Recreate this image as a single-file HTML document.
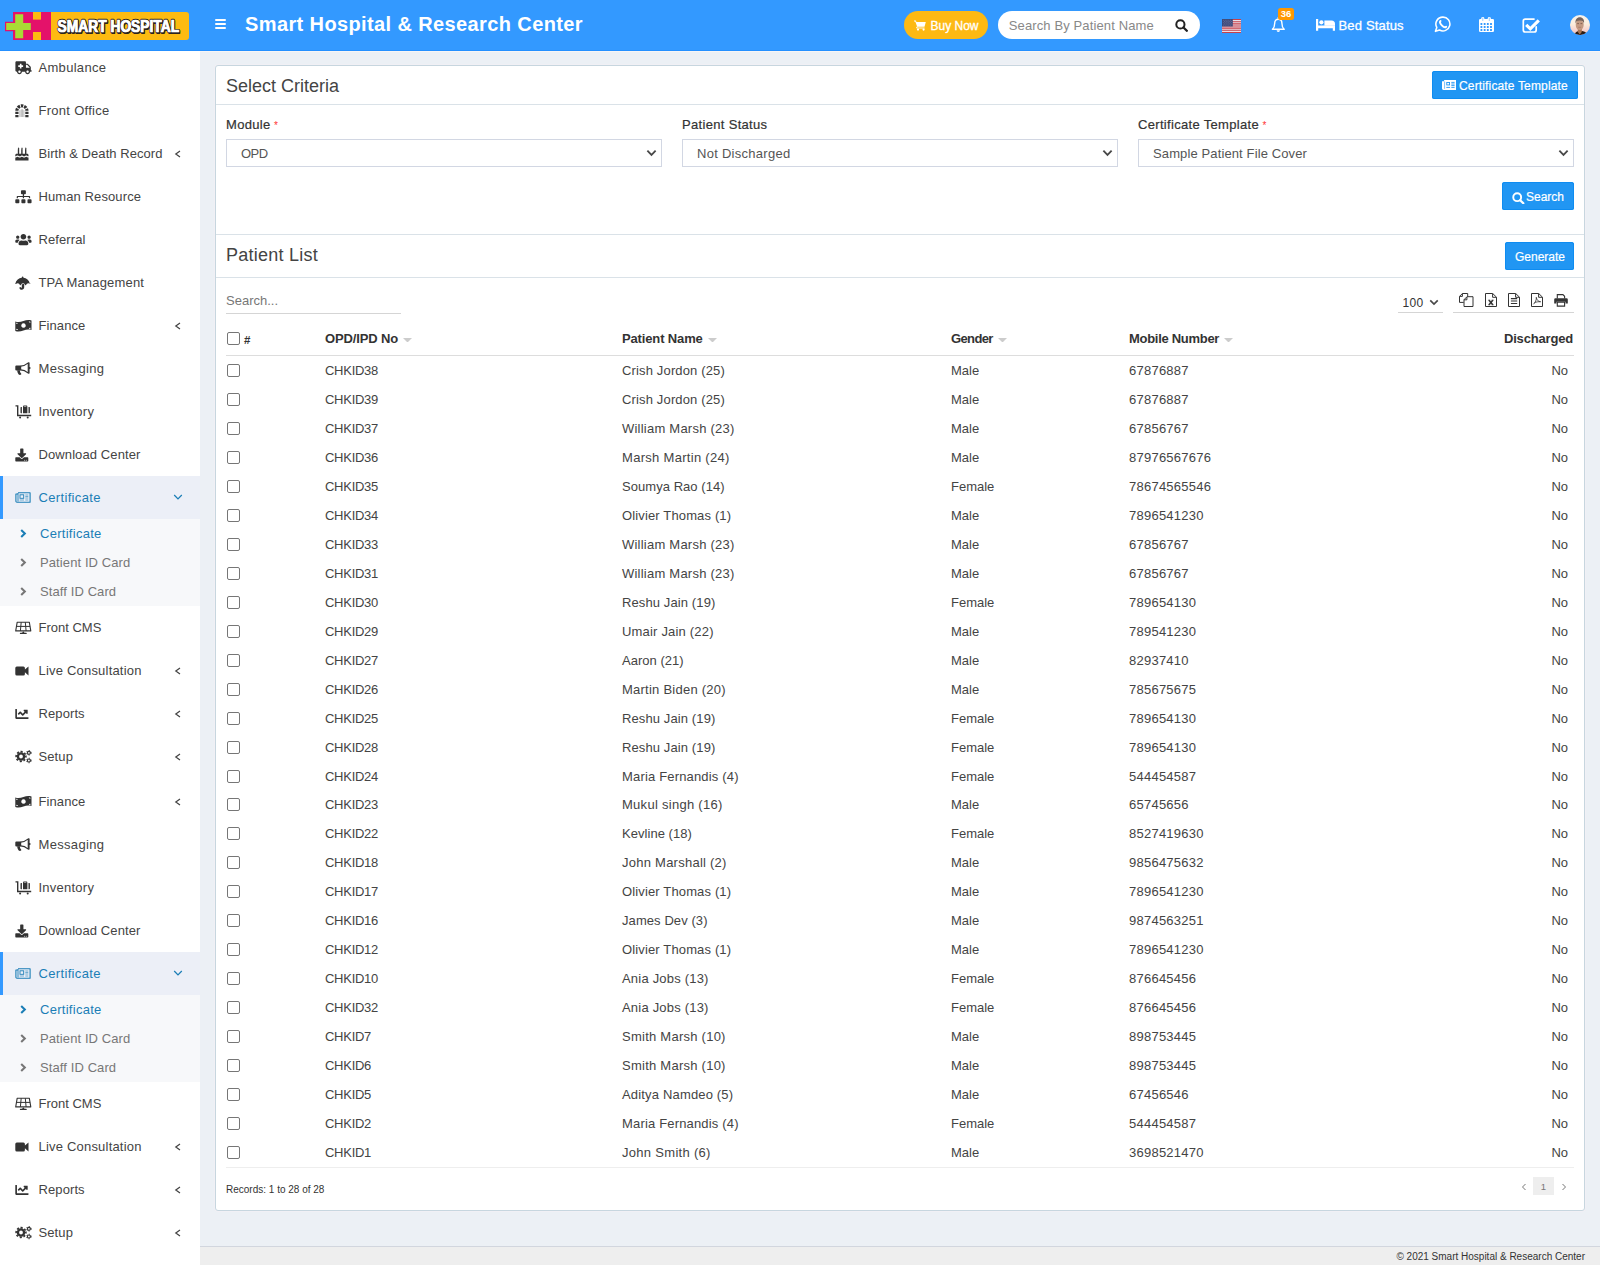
<!DOCTYPE html>
<html lang="en"><head><meta charset="utf-8"><title>Smart Hospital &amp; Research Center</title>
<style>
*{box-sizing:border-box}
html,body{margin:0;padding:0}
html{width:1600px;height:1265px;overflow:hidden}
body{width:1600px;height:1265px;overflow:hidden;background:#ecf0f5;font-family:"Liberation Sans",sans-serif;font-size:13px;color:#444;position:relative}
svg{display:block}
#hdr{position:absolute;left:0;top:0;width:1600px;height:51px;background:#3399ff;border-bottom:1px solid #2590ff;color:#fff}
#hl{position:absolute;left:200px;top:51px;width:1400px;height:1px;background:#f8f5f5}
#hdr>div{position:absolute}
#logo{left:5px;top:12px;width:185px;height:28px}
#burger{left:215px;top:19px;width:11px;height:10px}
#burger i{display:block;height:2px;background:#fff;margin-bottom:2px;border-radius:1px}
#title{left:245px;top:11px;font-size:20px;font-weight:bold;line-height:26px;letter-spacing:.385px;white-space:nowrap}
#buy{left:904px;top:11px;width:84px;height:28px;border-radius:14px;background:#fdb913;font-size:12px;-webkit-text-stroke:.3px #fff;line-height:28px;white-space:nowrap}
#buy svg{position:absolute;left:10.300px;top:9.300px;width:12px;height:11px}
#buy span{position:absolute;left:26.500px;top:1px}
#srch{left:998px;top:11px;width:202px;height:28px;border-radius:14px;background:#fff;color:#888;font-size:13px;letter-spacing:.12px;line-height:28px;white-space:nowrap}
#srch span{position:absolute;left:10.800px;top:1px}
#srch svg{position:absolute;left:177.300px;top:7.800px;width:13px;height:13px}
#flag{left:1222px;top:19px;width:19px;height:14px}
#bell{left:1270px;top:8px;width:26px;height:30px}
#bell svg{position:absolute;left:1.400px;top:9.400px;width:15px;height:16px}
#bell b{position:absolute;left:8px;top:0;width:16px;height:12px;border-radius:2.500px;background:#ff9800;font-size:9.500px;line-height:12.500px;text-align:center;font-weight:bold}
#bed{left:1315px;top:11px;height:28px;font-size:13px;letter-spacing:.16px;-webkit-text-stroke:.3px #fff;line-height:28px;white-space:nowrap}
#bed svg{position:absolute;left:1px;top:7.500px;width:19px;height:12px}
#bed span{position:absolute;left:23.500px;top:1px}
#wa{left:1433.500px;top:16px;width:17.500px;height:17.500px}
#cal{left:1479.200px;top:17px;width:15px;height:15px}
#chk{left:1522.400px;top:17.500px;width:18px;height:15px}
#ava{left:1570px;top:15px;width:20px;height:20px}
#side{position:absolute;left:0;top:51px;width:200px;height:1214px;background:#fff;overflow:hidden}
.mi{position:absolute;left:0;width:200px;height:43px;margin-top:-51px;color:#444;font-size:13px;letter-spacing:.1px;line-height:43px;white-space:nowrap}
.mi .ico{position:absolute;left:14.5px;top:15px;width:17px;height:14px;color:#333}
.mi .ico svg{width:17px;height:14px}
.mi .lb{position:absolute;left:38.500px;top:0}
.mi .ar{position:absolute;left:174px;top:18.500px;width:8px;height:8px;color:#444}
.mi .ar.ad{left:170px;top:17.800px;width:10px;height:8px}
.mi.act{background:#eceff7;border-left:3px solid #3399ff;color:#1b7eb6}
.mi.act .ico{left:11.5px;color:#1b7eb6}
.mi.act .lb{left:35.500px}
.mi.act .ar{left:170px;color:#1b7eb6}
.sub{position:absolute;left:0;width:200px;height:87px;margin-top:-51px;background:#f7f8fa}
.si{position:absolute;left:0;width:200px;height:29px;line-height:29px;color:#777;font-size:13px;letter-spacing:.1px;white-space:nowrap}
.si span{position:absolute;left:40px;top:0}
.si .ch{position:absolute;left:19px;top:10px;width:8px;height:9px}
.si.sa{color:#1b7eb6}
#card{position:absolute;left:215px;top:65px;width:1370px;height:1146px;background:#fff;border:1px solid #c7d6df;border-radius:3px;box-shadow:0 0 0 1px rgba(246,240,246,.5)}
#card>div,#card>table{position:absolute}
.h1{left:10px;height:38px;line-height:40px;font-size:18px;color:#444;white-space:nowrap}
.hr{left:0;width:1368px;height:1px;background:#dae2e8}
.btn{background:#2196f3;box-shadow:inset 0 0 0 1px #0e8cf1;color:#fff;border-radius:2.500px;font-size:12px;letter-spacing:.15px;-webkit-text-stroke:.2px #fff;white-space:nowrap}
.btn span{position:absolute;top:1px}
#btpl{left:1216px;top:5px;width:146px;height:28px;line-height:28px}
#btpl svg{position:absolute;left:9.800px;top:9.200px;width:14px;height:10px}
#btpl span{left:27px}
#bsearch{left:1286px;top:116px;width:72px;height:28px;line-height:28px}
#bsearch svg{position:absolute;left:10px;top:9.500px;width:12.500px;height:12.500px}
#bsearch span{left:24px}
#bgen{left:1289px;top:176px;width:69px;height:28px;line-height:28px}
#bgen span{left:10px}
.lab{top:48.500px;font-size:13px;line-height:20px;font-weight:normal;-webkit-text-stroke:.2px #333;letter-spacing:.32px;color:#333;white-space:nowrap}
.lab em{color:#f33;-webkit-text-stroke:0;font-style:normal;font-weight:normal;font-size:10px;margin-left:3.500px;position:relative;top:0}
.sel{top:73px;width:436px;height:28px;border:1px solid #d2d7e3;border-radius:0;line-height:26px;color:#555;font-size:13px;white-space:nowrap}
.sel span{position:absolute;left:14px;top:1px}
.sel .sar{position:absolute;right:4px;top:9.400px;width:11px;height:8px}
#tsearch{left:10px;top:225px;width:175px;height:23px;border-bottom:1px solid #d5d5d5;color:#777;font-size:13px;line-height:20px}
#plen{left:1182px;top:225px;width:45px;height:22px;border-bottom:1px solid #d5d5d5;line-height:23px;font-size:12px;letter-spacing:.3px;color:#333}
#plen span{position:absolute;left:4.500px;top:.5px}
#plen .sar{position:absolute;left:31px;top:8px;width:10px;height:7px}
#tools{left:1237px;top:225px;width:121px;height:22px;border-bottom:1px solid #d5d5d5}
#tools svg{position:absolute;top:2px;width:13px;height:14px}
#tools svg:first-child{width:15px}
#tools svg:last-child{width:14px;height:13px}
#tb{left:10px;top:256px;width:1348px;border-collapse:separate;border-spacing:0;table-layout:fixed;font-size:13px}
#tb th{height:34px;text-align:left;font-weight:bold;color:#333;border-bottom:1px solid #ddd;padding:0;white-space:nowrap;vertical-align:middle}
#tb td{height:29px;padding:0;color:#444;white-space:nowrap;vertical-align:middle}
#tb tbody tr:last-child td{border-bottom:1px solid #eee;height:30px}
#tb .c0{width:99px}
#tb .c1{width:297px}
#tb .c2{width:329px}
#tb .c3{width:178px}
#tb .c4{width:300px}
#tb .c5{text-align:right}
#tb td.c5{padding-right:6px}
.cb{display:inline-block;width:13px;height:13px;border:1px solid #767676;border-radius:2px;background:#fff;vertical-align:middle;margin-left:1px}
.hash{font-weight:bold;font-size:11.500px;margin-left:4px;vertical-align:middle;position:relative;top:.5px}
.so{display:inline-block;width:9px;height:4.500px;color:#ccc;margin-left:5px;vertical-align:middle;position:relative;top:.5px}
#rec{left:10px;top:1114px;font-size:10px;line-height:20px;color:#333;white-space:nowrap}
#pag{left:1299px;top:1111px;width:58px;height:18px}
#pag span{position:absolute;left:18px;top:0;width:21px;height:18px;background:#eee;color:#777;font-size:9.500px;line-height:20px;text-align:center}
#pag svg{position:absolute;top:5.700px;width:6px;height:8px}
#pag svg:first-child{left:5.500px}
#pag svg:last-child{left:46px}
#foot{position:absolute;left:200px;top:1246px;width:1400px;height:19px;background:#eee;border-top:1px solid #d2d6de;font-size:10px;padding-top:1px;line-height:17px;text-align:right;padding-right:15px;color:#333;white-space:nowrap}

#tb th{letter-spacing:-.14px}
#tb td.c1{letter-spacing:-.27px}
#tb td.c2{letter-spacing:.15px}
#tb td.c4{letter-spacing:.24px}
#tb td.c0{padding-bottom:2px}
#tb th .cb{position:relative;top:-1px}
.h1.pl{letter-spacing:.25px}
#bgen span{letter-spacing:0}
#bsearch span{letter-spacing:0}
#tb th.c3{letter-spacing:-.62px}
#tb th.c3 .so{margin-left:5.500px}
#tb th.c4{letter-spacing:-.29px}
#tb th.c5{letter-spacing:-.18px;padding-right:1px}
#tb tbody tr:nth-child(16) td{height:28.200px}
#tb tbody tr:nth-child(16) td{padding-bottom:1.200px}
#tb tbody tr:nth-child(16) td.c0{padding-bottom:3.200px}

</style></head><body>
<div id="hdr">
 <div id="logo"><svg viewBox="0 0 185 28" width="185" height="28"><path d="M46 0H181a3 3 0 0 1 3 3V25a3 3 0 0 1 -3 3H46Z" fill="#fdbb11"/><rect x="8" y="0" width="38" height="28" fill="#e4126a"/><rect x="28" y="0" width="8" height="7.600" fill="#fdbb11"/><rect x="28" y="20" width="8" height="8" fill="#fdbb11"/><path d="M9 1H19.400V9.800H27V19.200H19.400V27.400H9V19.200H0V9.800H9Z" fill="#e4126a"/><path d="M10.200 2.200H18.200V11H25.800V18H18.200V26.200H10.200V18H1.200V11H10.200Z" fill="#a9dc35"/><text x="53.300" y="21" font-family="Liberation Sans, sans-serif" font-weight="bold" font-size="16.500" textLength="121.500" lengthAdjust="spacingAndGlyphs" fill="#2b2320" stroke="#2b2320" stroke-width="2.200" stroke-linejoin="round">SMART HOSPITAL</text><text x="52.600" y="20.300" font-family="Liberation Sans, sans-serif" font-weight="bold" font-size="16.500" textLength="121.500" lengthAdjust="spacingAndGlyphs" fill="#fff" stroke="#2b2320" stroke-width="2.400" stroke-linejoin="round" paint-order="stroke">SMART HOSPITAL</text><text x="52.600" y="20.300" font-family="Liberation Sans, sans-serif" font-weight="bold" font-size="16.500" textLength="121.500" lengthAdjust="spacingAndGlyphs" fill="#fff" stroke="#fff" stroke-width=".7">SMART HOSPITAL</text></svg></div>
 <div id="burger"><i></i><i></i><i></i></div>
 <div id="title">Smart Hospital &amp; Research Center</div>
 <div id="buy"><svg viewBox="0 0 12 11"><path d="M0 .6h1.900l.5 1.500h9.400l-1.300 4.600h-7.300l-1.900-5.200h-1.300z" fill="#fff"/><path d="M3.200 6.500l-.6 1.500h8" stroke="#fff" stroke-width=".9" fill="none"/><circle cx="4" cy="9.600" r="1.100" fill="#fff"/><circle cx="9.600" cy="9.600" r="1.100" fill="#fff"/></svg><span>Buy Now</span></div>
 <div id="srch"><span>Search By Patient Name</span><svg viewBox="0 0 13 13"><circle cx="5.400" cy="5.400" r="4.100" fill="none" stroke="#222" stroke-width="2"/><path d="M8.500 8.500l3.300 3.300" stroke="#222" stroke-width="2.300" stroke-linecap="round"/></svg></div>
 <div id="flag"><svg viewBox="0 0 19 14"><rect width="19" height="14" fill="#e9dfe6"/><path d="M0 .55h19M0 2.700h19M0 4.850h19M0 7h19M0 9.150h19M0 11.300h19M0 13.450h19" stroke="#c8414b" stroke-width="1.100"/><rect width="10.800" height="7.500" fill="#3f4a7a"/><path d="M1 1.300h9M1 3.700h9M1 6.100h9" stroke="#6b75a0" stroke-width=".8" stroke-dasharray=".8 1"/><path d="M2 2.500h8M2 4.900h8" stroke="#6b75a0" stroke-width=".8" stroke-dasharray=".8 1"/></svg></div>
 <div id="bell"><svg viewBox="0 0 15 16"><path d="M7.300 .6v1.400M1.400 12.200c1.700-1.400 2.300-3.200 2.300-6 0-2.400 1.500-3.900 3.600-3.900s3.600 1.500 3.600 3.900c0 2.800.6 4.600 2.300 6z" fill="none" stroke="#fff" stroke-width="1.400" stroke-linejoin="round" stroke-linecap="round"/><path d="M5.600 13.200a1.700 1.700 0 0 0 3.400 0z" fill="#fff"/></svg><b>36</b></div>
 <div id="bed"><svg viewBox="0 0 19 12"><path d="M0 0h2.200v6.500h14.600v0h2.200v5.300h-2.200v-2.600h-14.600v2.600h-2.200z" fill="#fff"/><circle cx="5.400" cy="3.300" r="2.100" fill="#fff"/><path d="M8.400 1.500h7.100a3.500 3.500 0 0 1 3.500 3.500v1.800h-10.600z" fill="#fff"/></svg><span>Bed Status</span></div>
 <div id="wa"><svg viewBox="0 0 17 17"><path d="M8.700 1.100a6.700 6.700 0 1 1 -3.300 12.500l-4 1.300 1.300-3.800a6.700 6.700 0 0 1 6-10z" fill="none" stroke="#fff" stroke-width="1.500" stroke-linejoin="round"/><path d="M6.300 4.900c-.9.900-.3 2.600 1.300 4.200s3.300 2.200 4.200 1.300" fill="none" stroke="#fff" stroke-width="1.900" stroke-linecap="round"/></svg></div>
 <div id="cal"><svg viewBox="0 0 15 15"><path d="M1.200 2h12.600a1.200 1.200 0 0 1 1.200 1.200v10.600a1.200 1.200 0 0 1 -1.200 1.200h-12.600a1.200 1.200 0 0 1 -1.200-1.200v-10.600a1.200 1.200 0 0 1 1.200-1.200z" fill="#fff"/><path d="M1.5 6.1h1.800v1.800h-1.800zM4.75 6.1h1.800v1.800h-1.800zM7.9 6.1h1.800v1.800h-1.800zM11.1 6.1h1.800v1.800h-1.800zM1.5 9.1h1.800v1.800h-1.800zM4.75 9.1h1.800v1.800h-1.800zM7.9 9.1h1.800v1.800h-1.800zM11.1 9.1h1.800v1.800h-1.800zM1.5 12.1h1.800v1.800h-1.800zM4.75 12.1h1.800v1.800h-1.800zM7.9 12.1h1.800v1.800h-1.800zM11.1 12.1h1.800v1.800h-1.800z" fill="#3399ff"/><rect x="2.300" y="0" width="3" height="4" rx="1.300" fill="#fff"/><rect x="8.800" y="0" width="3" height="4" rx="1.300" fill="#fff"/><path d="M3.800 1v2.600M10.300 1v2.600" stroke="#59abff" stroke-width=".6" stroke-linecap="round"/></svg></div>
 <div id="chk"><svg viewBox="0 0 18 15"><path d="M14.200 8.800v3.200a2 2 0 0 1 -2 2h-8.900a2 2 0 0 1 -2-2v-8.900a2 2 0 0 1 2-2h8.700" fill="none" stroke="#fff" stroke-width="1.700" stroke-linecap="round"/><path d="M4.200 6.800l4.100 4.100 8.500-8.600" fill="none" stroke="#fff" stroke-width="3.100"/></svg></div>
 <div id="ava"><svg viewBox="0 0 20 20"><defs><clipPath id="avc"><circle cx="10" cy="10" r="10"/></clipPath><linearGradient id="avg" x1="0" y1="0" x2="0" y2="1"><stop offset="0" stop-color="#f7f2ec"/><stop offset=".45" stop-color="#fbeedd"/><stop offset=".75" stop-color="#f8d3cd"/><stop offset="1" stop-color="#d9b9c4"/></linearGradient><filter id="avb" x="-20%" y="-20%" width="140%" height="140%"><feGaussianBlur stdDeviation=".55"/></filter></defs><g clip-path="url(#avc)"><rect width="20" height="20" fill="url(#avg)"/><g filter="url(#avb)"><path d="M4.500 20c.5-2.500 2-3.500 4-4h3.500c3 .5 4.500 1.500 5.500 4z" fill="#2b1a12"/><path d="M7.800 13.500h4v3.500l-2 2.500-2-2.500z" fill="#a87452"/><ellipse cx="9.700" cy="9.800" rx="4" ry="5.400" fill="#c39a82"/><path d="M5.500 8.500c-.5-4 1.500-6.300 4.300-6.300 2.900 0 4.800 2.300 4.200 6.300-.5-1.800-1.200-3-4.200-3s-3.800 1.200-4.300 3z" fill="#75645b"/><path d="M7.200 8.600h1.800M10.500 8.600h1.800" stroke="#6b4b3e" stroke-width=".7"/><path d="M8.300 12.300h2.800" stroke="#a06a5a" stroke-width=".6"/></g></g></svg></div>
</div>
<div id="hl"></div>
<div id="side">
<div class="mi" style="top:45.5px"><span class="ico"><svg viewBox="0 0 17 14"><g transform="translate(.4 .2) scale(.02539)"><path d="M624 352h-16V243.900c0-12.700-5.100-24.900-14.100-33.900L494 110.100c-9-9-21.200-14.100-33.900-14.100H416V48c0-26.500-21.500-48-48-48H48C21.500 0 0 21.500 0 48v320c0 26.500 21.500 48 48 48h16c0 53 43 96 96 96s96-43 96-96h128c0 53 43 96 96 96s96-43 96-96h48c8.800 0 16-7.200 16-16v-32c0-8.800-7.200-16-16-16zM160 464c-26.500 0-48-21.500-48-48s21.500-48 48-48 48 21.500 48 48-21.500 48-48 48zm144-248c0 4.400-3.600 8-8 8h-56v56c0 4.400-3.600 8-8 8h-48c-4.400 0-8-3.600-8-8v-56h-56c-4.400 0-8-3.600-8-8v-48c0-4.400 3.600-8 8-8h56v-56c0-4.400 3.600-8 8-8h48c4.400 0 8 3.600 8 8v56h56c4.400 0 8 3.600 8 8v48zm176 248c-26.500 0-48-21.500-48-48s21.500-48 48-48 48 21.500 48 48-21.500 48-48 48zm80-208H416V144h44.100l99.900 99.900V256z" fill="currentColor"/></g></svg></span><span class="lb" style="letter-spacing:0.30px">Ambulance</span></div>
<div class="mi" style="top:88.5px"><span class="ico"><svg viewBox="0 0 17 14"><path d="M1.900 6.800A5 5 0 0 1 11.900 6.800" fill="none" stroke="currentColor" stroke-width="3.200" stroke-dasharray="2.420 .9"/><path d="M.3 7.800h3.200v2.200h-3.200zM.3 10.900h3.200v2.300h-3.200zM10.300 7.800h3.200v2.200h-3.200zM10.300 10.900h3.200v2.300h-3.200z" fill="currentColor"/><path d="M4.900 6.200v6.800M6.300 5.300v7.700M7.600 5.300v7.700M8.900 6.200v6.800" stroke="#9a9a9a" stroke-width=".7" fill="none"/></svg></span><span class="lb" style="letter-spacing:0.28px">Front Office</span></div>
<div class="mi" style="top:131.5px"><span class="ico"><svg viewBox="0 0 17 14"><path d="M2.800 2.200c0-.8.700-1.200.700-2 .5.400.8 1 .8 1.700 0 .4-.2.700-.5.800h.4v4.500h-1.400v-4.500h.5c-.3-.1-.5-.3-.5-.5zM6.200 2.200c0-.8.700-1.200.700-2 .5.400.8 1 .8 1.700 0 .4-.2.700-.5.800h.4v4.500h-1.400v-4.500h.5c-.3-.1-.5-.3-.5-.5zM10 2.200c0-.8.700-1.200.700-2 .5.400.8 1 .8 1.700 0 .4-.2.700-.5.800h.4v4.500h-1.400v-4.500h.5c-.3-.1-.5-.3-.5-.5z" fill="currentColor"/><path d="M.3 8.100c0-.8.600-1.400 1.400-1.400h10.400c.8 0 1.400.6 1.400 1.400v1.200c-1.100 0-1.100-.8-2.200-.8s-1.100.8-2.200.8-1.100-.8-2.200-.8-1.100.8-2.200.8-1.100-.8-2.200-.8-1.100.8-2.200.8z" fill="currentColor"/><path d="M.3 10.500c1.100 0 1.100-.8 2.200-.8s1.100.8 2.200.8 1.100-.8 2.200-.8 1.100.8 2.200.8 1.100-.8 2.200-.8 1.100.8 2.200.8v2.900h-13.200z" fill="currentColor"/></svg></span><span class="lb" style="letter-spacing:0.06px">Birth &amp; Death Record</span><svg class="ar" viewBox="0 0 8 8"><path d="M6 1L1.800 4L6 7" fill="none" stroke="currentColor" stroke-width="1.250"/></svg></div>
<div class="mi" style="top:174.5px"><span class="ico"><svg viewBox="0 0 17 14"><g transform="translate(.3 .2) scale(.02539)"><path d="M128 352H32c-17.670 0-32 14.330-32 32v96c0 17.670 14.330 32 32 32h96c17.670 0 32-14.330 32-32v-96c0-17.670-14.330-32-32-32zm-24-80h192v48h48v-48h192v48h48v-57.590c0-21.170-17.230-38.410-38.410-38.410H344v-64h40c17.670 0 32-14.330 32-32V32c0-17.670-14.330-32-32-32H256c-17.670 0-32 14.330-32 32v96c0 17.670 14.330 32 32 32h40v64H94.410C73.230 224 56 241.230 56 262.410V320h48v-48zm264 80h-96c-17.670 0-32 14.330-32 32v96c0 17.670 14.330 32 32 32h96c17.670 0 32-14.330 32-32v-96c0-17.670-14.330-32-32-32zm240 0h-96c-17.670 0-32 14.330-32 32v96c0 17.670 14.330 32 32 32h96c17.670 0 32-14.330 32-32v-96c0-17.670-14.330-32-32-32z" fill="currentColor"/></g></svg></span><span class="lb">Human Resource</span></div>
<div class="mi" style="top:217.5px"><span class="ico"><svg viewBox="0 0 17 14"><g transform="translate(.3 .1) scale(.02539)"><path d="M96 224c35.300 0 64-28.700 64-64s-28.700-64-64-64-64 28.700-64 64 28.700 64 64 64zm448 0c35.300 0 64-28.700 64-64s-28.700-64-64-64-64 28.700-64 64 28.700 64 64 64zm32 32h-64c-17.600 0-33.500 7.100-45.100 18.600 40.300 22.100 68.900 62 75.100 109.400h66c17.700 0 32-14.300 32-32v-32c0-35.300-28.700-64-64-64zm-256 0c61.900 0 112-50.100 112-112S381.900 32 320 32 208 82.100 208 144s50.100 112 112 112zm76.800 32h-8.300c-20.800 10-43.900 16-68.500 16s-47.600-6-68.500-16h-8.300C179.600 288 128 339.600 128 403.200V432c0 26.500 21.500 48 48 48h288c26.500 0 48-21.500 48-48v-28.800c0-63.600-51.600-115.200-115.200-115.200zm-223.700-13.400C161.500 263.100 145.600 256 128 256H64c-35.300 0-64 28.700-64 64v32c0 17.700 14.300 32 32 32h65.900c6.300-47.400 34.900-87.300 75.200-109.400z" fill="currentColor"/></g></svg></span><span class="lb">Referral</span></div>
<div class="mi" style="top:260.5px"><span class="ico"><svg viewBox="0 0 17 14"><g transform="translate(.3 .5) scale(.02539)"><path d="M575.700 280.800C547.100 144.500 437.300 62.600 320 49.900V32c0-17.700-14.300-32-32-32s-32 14.300-32 32v17.900C138.300 62.600 29.500 144.500.3 280.800c-2.200 10.100 8.500 21.300 23.100 12.400 21.200-13.700 45.900-31.900 72.300-31.900 38.700 0 71 39.200 88.500 73.800 7.700 15.500 22.400 15 30.200 0 17.100-33.100 49.100-73.800 89.500-73.800 38.500 0 70.800 39.200 88.400 73.800 7.700 15.400 22.300 15.100 30.200 0 17.100-33.100 49.200-73.800 89.500-73.800 26.300 0 52.200 19 72.300 31.900 15 9.400 25.100-2.200 23.100-12.400zM256 301.700V432c0 8.800-7.200 16-16 16-7.800 0-13.200-5.300-15.100-10.700-5.900-16.700-24.100-25.400-40.800-19.500-16.700 5.900-25.400 24.200-19.500 40.800 13.600 38.500 49.900 64.300 90.400 64.300 52.900 0 96-43.100 96-96V301.700c-9.700-4.400-20.700-7.700-32-7.700-11.600 0-22.600 3.300-32 7.700z" fill="currentColor"/></g></svg></span><span class="lb" style="letter-spacing:0.18px">TPA Management</span></div>
<div class="mi" style="top:303.5px"><span class="ico"><svg viewBox="0 0 17 14"><path d="M.3 2.600c2.800.9 5.300.5 8.100-.5s5.300-1.400 8.100-.5v9.400c-2.800-.9-5.300-.5-8.100.5s-5.300 1.400-8.100.5zM8.500 4.300a2.250 2.250 0 1 0 .01 0zM1.400 3.700v1.200c.7 0 1.200-.4 1.300-1zM1.400 10.900c.7.200 1.300.2 1.600.2 0-.8-.7-1.300-1.600-1.400zM15.400 2.700c-.6-.2-1.200-.2-1.600-.2 .1.700.8 1.200 1.600 1.300zM15.400 9.900v-1.200c-.8 0-1.400.4-1.500 1z" fill="currentColor" fill-rule="evenodd"/></svg></span><span class="lb">Finance</span><svg class="ar" viewBox="0 0 8 8"><path d="M6 1L1.800 4L6 7" fill="none" stroke="currentColor" stroke-width="1.250"/></svg></div>
<div class="mi" style="top:346.5px"><span class="ico"><svg viewBox="0 0 17 14"><path d="M1.300 3.500h4.900v5h-4.900a1 1 0 0 1 -1-1v-3a1 1 0 0 1 1-1z" fill="currentColor"/><path d="M5.700 4.100c3 0 5.400-1.400 7.600-3.200v10.200c-2.200-1.800-4.600-3.200-7.600-3.200" fill="none" stroke="currentColor" stroke-width="1.200" stroke-linejoin="round"/><path d="M13.200.4h1.400v4.600a1 1 0 0 1 0 2v4.600h-1.400z" fill="currentColor"/><path d="M2.200 8.300h2.800c-.2 1.300.2 2.300 1.100 3.300.4.400.2 1-.3 1.200-.7.200-1.500.2-2.100-.2-.9-1.300-1.500-2.800-1.500-4.300z" fill="currentColor"/></svg></span><span class="lb" style="letter-spacing:0.32px">Messaging</span></div>
<div class="mi" style="top:389.5px"><span class="ico"><svg viewBox="0 0 17 14"><path d="M.5.900h2.200v9.600h13.500" fill="none" stroke="currentColor" stroke-width="1.400"/><circle cx="5.100" cy="12.400" r="1" fill="currentColor"/><circle cx="12.700" cy="12.400" r="1" fill="currentColor"/><path d="M8 2h4.400v6.200h-4.400zM8.800.5h2.800a.7.700 0 0 1 .7.700v1h-1v-.7h-2.200v.7h-1v-1a.7.700 0 0 1 .7-.7zM5.500 2.600a.6.600 0 0 1 .6-.6h.8v6.200h-.8a.6.600 0 0 1 -.6-.6zM13.500 2h.8a.6.600 0 0 1 .6.600v5a.6.600 0 0 1 -.6.600h-.8z" fill="currentColor"/></svg></span><span class="lb" style="letter-spacing:0.24px">Inventory</span></div>
<div class="mi" style="top:432.5px"><span class="ico"><svg viewBox="0 0 17 14"><g transform="translate(.3 .4) scale(.02539)"><path d="M216 0h80c13.300 0 24 10.700 24 24v168h87.700c17.800 0 26.700 21.500 14.100 34.100L269.700 378.300c-7.500 7.500-19.800 7.500-27.300 0L90.100 226.100c-12.600-12.600-3.700-34.100 14.100-34.100H192V24c0-13.300 10.700-24 24-24zm296 376v112c0 13.300-10.700 24-24 24H24c-13.300 0-24-10.700-24-24V376c0-13.300 10.700-24 24-24h146.700l49 49c20.100 20.100 52.500 20.100 72.600 0l49-49H488c13.300 0 24 10.700 24 24zm-124 88c0-11-9-20-20-20s-20 9-20 20 9 20 20 20 20-9 20-20zm64 0c0-11-9-20-20-20s-20 9-20 20 9 20 20 20 20-9 20-20z" fill="currentColor"/></g></svg></span><span class="lb">Download Center</span></div>
<div class="mi act" style="top:475.5px"><span class="ico"><svg viewBox="0 0 17 14"><path d="M3 1.700h12.100v9.500h-13.200a1 1 0 0 1 -1-1v-7.200h2.100" fill="none" stroke="currentColor" stroke-width="1.100" stroke-linejoin="round"/><path d="M3 2v8.500" stroke="currentColor" stroke-width=".9" fill="none"/><rect x="5" y="3.800" width="3.700" height="3.500" fill="none" stroke="currentColor" stroke-width=".9"/><path d="M10.300 4h3M10.300 5.500h3M10.300 7h3M4.600 9h4.400M10.300 9h3" stroke="currentColor" stroke-width=".7" fill="none" opacity=".85"/></svg></span><span class="lb" style="letter-spacing:0.34px">Certificate</span><svg class="ar ad" viewBox="0 0 10 8"><path d="M1.200 2L5 5.900L8.800 2" fill="none" stroke="currentColor" stroke-width="1.250"/></svg></div>
<div class="sub" style="top:518.5px"><div class="si sa" style="top:0px"><svg class="ch" viewBox="0 0 8 10"><path d="M2 1.2 L6 5 L2 8.8" fill="none" stroke="currentColor" stroke-width="2.300"/></svg><span style="letter-spacing:.28px">Certificate</span></div><div class="si" style="top:29px"><svg class="ch" viewBox="0 0 8 10"><path d="M2 1.2 L6 5 L2 8.8" fill="none" stroke="currentColor" stroke-width="2.300"/></svg><span>Patient ID Card</span></div><div class="si" style="top:58px"><svg class="ch" viewBox="0 0 8 10"><path d="M2 1.2 L6 5 L2 8.8" fill="none" stroke="currentColor" stroke-width="2.300"/></svg><span>Staff ID Card</span></div></div>
<div class="mi" style="top:605.5px"><span class="ico"><svg viewBox="0 0 17 14"><path d="M2.200 1.200h12.100l1.500 8.700h-15.100z" fill="none" stroke="currentColor" stroke-width="1.100" stroke-linejoin="round"/><path d="M1.500 5.400h13.600M6.200 1.200l-.8 8.700M10.300 1.200l.8 8.700" fill="none" stroke="currentColor" stroke-width="1"/><path d="M8.300 10.300l1.200 1.400h1.700a.5.500 0 0 1 .5.500v.7h-6.800v-.7a.5.500 0 0 1 .5-.5h1.700z" fill="currentColor"/></svg></span><span class="lb" style="letter-spacing:0.00px">Front CMS</span></div>
<div class="mi" style="top:648.5px"><span class="ico"><svg viewBox="0 0 17 14"><path d="M1.800 2.400h6.600a1.500 1.500 0 0 1 1.500 1.500v1.700l3.600-3.100v8.900l-3.600-3.100v1.700a1.500 1.500 0 0 1 -1.500 1.500h-6.600a1.500 1.500 0 0 1 -1.500-1.500v-6.100a1.500 1.500 0 0 1 1.500-1.500z" fill="currentColor"/></svg></span><span class="lb" style="letter-spacing:0.20px">Live Consultation</span><svg class="ar" viewBox="0 0 8 8"><path d="M6 1L1.800 4L6 7" fill="none" stroke="currentColor" stroke-width="1.250"/></svg></div>
<div class="mi" style="top:691.5px"><span class="ico"><svg viewBox="0 0 17 14"><g transform="translate(.3 .4) scale(.02578)"><path d="M496 384H64V80c0-8.840-7.160-16-16-16H16C7.160 64 0 71.160 0 80v336c0 17.670 14.330 32 32 32h464c8.840 0 16-7.160 16-16v-32c0-8.840-7.160-16-16-16zM464 96H345.940c-21.380 0-32.090 25.850-16.970 40.970l32.400 32.400L288 242.750l-73.370-73.370c-12.500-12.500-32.760-12.500-45.250 0l-68.690 68.690c-6.250 6.250-6.250 16.380 0 22.630l22.620 22.620c6.250 6.250 16.380 6.250 22.630 0L192 237.250l73.370 73.370c12.500 12.500 32.760 12.500 45.250 0l96-96 32.400 32.400c15.120 15.120 40.970 4.410 40.970-16.970V112c.01-8.840-7.150-16-15.990-16z" fill="currentColor"/></g></svg></span><span class="lb">Reports</span><svg class="ar" viewBox="0 0 8 8"><path d="M6 1L1.800 4L6 7" fill="none" stroke="currentColor" stroke-width="1.250"/></svg></div>
<div class="mi" style="top:734.5px"><span class="ico"><svg viewBox="0 0 17 14"><g fill="none" stroke="currentColor"><circle cx="6" cy="6.500" r="3.100" stroke-width="2.400"/><circle cx="6" cy="6.500" r="4.900" stroke-width="1.600" stroke-dasharray="2.050 1.800" transform="rotate(-12 6 6.500)"/><circle cx="13.900" cy="2.800" r="1.500" stroke-width="1.200"/><circle cx="13.900" cy="2.800" r="2.300" stroke-width=".9" stroke-dasharray="1.200 1.210"/><circle cx="13.900" cy="10.500" r="1.500" stroke-width="1.200"/><circle cx="13.900" cy="10.500" r="2.300" stroke-width=".9" stroke-dasharray="1.200 1.210"/></g></svg></span><span class="lb">Setup</span><svg class="ar" viewBox="0 0 8 8"><path d="M6 1L1.800 4L6 7" fill="none" stroke="currentColor" stroke-width="1.250"/></svg></div>
<div class="mi" style="top:779.5px"><span class="ico"><svg viewBox="0 0 17 14"><path d="M.3 2.600c2.800.9 5.300.5 8.100-.5s5.300-1.400 8.100-.5v9.400c-2.800-.9-5.300-.5-8.100.5s-5.300 1.400-8.100.5zM8.500 4.300a2.250 2.250 0 1 0 .01 0zM1.400 3.700v1.200c.7 0 1.200-.4 1.300-1zM1.400 10.900c.7.200 1.300.2 1.600.2 0-.8-.7-1.300-1.600-1.400zM15.400 2.700c-.6-.2-1.200-.2-1.600-.2 .1.700.8 1.200 1.600 1.300zM15.400 9.900v-1.200c-.8 0-1.400.4-1.500 1z" fill="currentColor" fill-rule="evenodd"/></svg></span><span class="lb">Finance</span><svg class="ar" viewBox="0 0 8 8"><path d="M6 1L1.800 4L6 7" fill="none" stroke="currentColor" stroke-width="1.250"/></svg></div>
<div class="mi" style="top:822.5px"><span class="ico"><svg viewBox="0 0 17 14"><path d="M1.300 3.500h4.900v5h-4.900a1 1 0 0 1 -1-1v-3a1 1 0 0 1 1-1z" fill="currentColor"/><path d="M5.700 4.100c3 0 5.400-1.400 7.600-3.200v10.200c-2.200-1.800-4.600-3.200-7.600-3.200" fill="none" stroke="currentColor" stroke-width="1.200" stroke-linejoin="round"/><path d="M13.200.4h1.400v4.600a1 1 0 0 1 0 2v4.600h-1.400z" fill="currentColor"/><path d="M2.200 8.300h2.800c-.2 1.300.2 2.300 1.100 3.300.4.400.2 1-.3 1.200-.7.200-1.500.2-2.100-.2-.9-1.300-1.500-2.800-1.500-4.300z" fill="currentColor"/></svg></span><span class="lb" style="letter-spacing:0.32px">Messaging</span></div>
<div class="mi" style="top:865.5px"><span class="ico"><svg viewBox="0 0 17 14"><path d="M.5.900h2.200v9.600h13.500" fill="none" stroke="currentColor" stroke-width="1.400"/><circle cx="5.100" cy="12.400" r="1" fill="currentColor"/><circle cx="12.700" cy="12.400" r="1" fill="currentColor"/><path d="M8 2h4.400v6.200h-4.400zM8.800.5h2.800a.7.700 0 0 1 .7.700v1h-1v-.7h-2.200v.7h-1v-1a.7.700 0 0 1 .7-.7zM5.500 2.600a.6.600 0 0 1 .6-.6h.8v6.200h-.8a.6.600 0 0 1 -.6-.6zM13.500 2h.8a.6.600 0 0 1 .6.600v5a.6.600 0 0 1 -.6.600h-.8z" fill="currentColor"/></svg></span><span class="lb" style="letter-spacing:0.24px">Inventory</span></div>
<div class="mi" style="top:908.5px"><span class="ico"><svg viewBox="0 0 17 14"><g transform="translate(.3 .4) scale(.02539)"><path d="M216 0h80c13.300 0 24 10.700 24 24v168h87.700c17.800 0 26.700 21.500 14.100 34.100L269.700 378.300c-7.500 7.500-19.800 7.500-27.300 0L90.100 226.100c-12.600-12.600-3.700-34.100 14.100-34.100H192V24c0-13.300 10.700-24 24-24zm296 376v112c0 13.300-10.700 24-24 24H24c-13.300 0-24-10.700-24-24V376c0-13.300 10.700-24 24-24h146.700l49 49c20.100 20.100 52.500 20.100 72.600 0l49-49H488c13.300 0 24 10.700 24 24zm-124 88c0-11-9-20-20-20s-20 9-20 20 9 20 20 20 20-9 20-20zm64 0c0-11-9-20-20-20s-20 9-20 20 9 20 20 20 20-9 20-20z" fill="currentColor"/></g></svg></span><span class="lb">Download Center</span></div>
<div class="mi act" style="top:951.5px"><span class="ico"><svg viewBox="0 0 17 14"><path d="M3 1.700h12.100v9.500h-13.200a1 1 0 0 1 -1-1v-7.200h2.100" fill="none" stroke="currentColor" stroke-width="1.100" stroke-linejoin="round"/><path d="M3 2v8.500" stroke="currentColor" stroke-width=".9" fill="none"/><rect x="5" y="3.800" width="3.700" height="3.500" fill="none" stroke="currentColor" stroke-width=".9"/><path d="M10.300 4h3M10.300 5.500h3M10.300 7h3M4.600 9h4.400M10.300 9h3" stroke="currentColor" stroke-width=".7" fill="none" opacity=".85"/></svg></span><span class="lb" style="letter-spacing:0.34px">Certificate</span><svg class="ar ad" viewBox="0 0 10 8"><path d="M1.200 2L5 5.900L8.800 2" fill="none" stroke="currentColor" stroke-width="1.250"/></svg></div>
<div class="sub" style="top:994.5px"><div class="si sa" style="top:0px"><svg class="ch" viewBox="0 0 8 10"><path d="M2 1.2 L6 5 L2 8.8" fill="none" stroke="currentColor" stroke-width="2.300"/></svg><span style="letter-spacing:.28px">Certificate</span></div><div class="si" style="top:29px"><svg class="ch" viewBox="0 0 8 10"><path d="M2 1.2 L6 5 L2 8.8" fill="none" stroke="currentColor" stroke-width="2.300"/></svg><span>Patient ID Card</span></div><div class="si" style="top:58px"><svg class="ch" viewBox="0 0 8 10"><path d="M2 1.2 L6 5 L2 8.8" fill="none" stroke="currentColor" stroke-width="2.300"/></svg><span>Staff ID Card</span></div></div>
<div class="mi" style="top:1081.5px"><span class="ico"><svg viewBox="0 0 17 14"><path d="M2.200 1.200h12.100l1.500 8.700h-15.100z" fill="none" stroke="currentColor" stroke-width="1.100" stroke-linejoin="round"/><path d="M1.500 5.400h13.600M6.200 1.200l-.8 8.700M10.300 1.200l.8 8.700" fill="none" stroke="currentColor" stroke-width="1"/><path d="M8.300 10.300l1.200 1.400h1.700a.5.500 0 0 1 .5.500v.7h-6.800v-.7a.5.500 0 0 1 .5-.5h1.700z" fill="currentColor"/></svg></span><span class="lb" style="letter-spacing:0.00px">Front CMS</span></div>
<div class="mi" style="top:1124.5px"><span class="ico"><svg viewBox="0 0 17 14"><path d="M1.800 2.400h6.600a1.500 1.500 0 0 1 1.500 1.500v1.700l3.600-3.100v8.900l-3.600-3.100v1.700a1.500 1.500 0 0 1 -1.500 1.500h-6.600a1.500 1.500 0 0 1 -1.500-1.500v-6.100a1.500 1.500 0 0 1 1.500-1.500z" fill="currentColor"/></svg></span><span class="lb" style="letter-spacing:0.20px">Live Consultation</span><svg class="ar" viewBox="0 0 8 8"><path d="M6 1L1.800 4L6 7" fill="none" stroke="currentColor" stroke-width="1.250"/></svg></div>
<div class="mi" style="top:1167.5px"><span class="ico"><svg viewBox="0 0 17 14"><g transform="translate(.3 .4) scale(.02578)"><path d="M496 384H64V80c0-8.840-7.160-16-16-16H16C7.160 64 0 71.160 0 80v336c0 17.670 14.330 32 32 32h464c8.840 0 16-7.160 16-16v-32c0-8.840-7.160-16-16-16zM464 96H345.940c-21.380 0-32.090 25.850-16.970 40.970l32.400 32.400L288 242.750l-73.370-73.370c-12.500-12.500-32.760-12.500-45.250 0l-68.690 68.690c-6.250 6.250-6.250 16.380 0 22.630l22.620 22.620c6.250 6.250 16.380 6.250 22.630 0L192 237.250l73.370 73.370c12.500 12.500 32.760 12.500 45.250 0l96-96 32.400 32.400c15.120 15.120 40.970 4.410 40.970-16.970V112c.01-8.840-7.150-16-15.990-16z" fill="currentColor"/></g></svg></span><span class="lb">Reports</span><svg class="ar" viewBox="0 0 8 8"><path d="M6 1L1.800 4L6 7" fill="none" stroke="currentColor" stroke-width="1.250"/></svg></div>
<div class="mi" style="top:1210.5px"><span class="ico"><svg viewBox="0 0 17 14"><g fill="none" stroke="currentColor"><circle cx="6" cy="6.500" r="3.100" stroke-width="2.400"/><circle cx="6" cy="6.500" r="4.900" stroke-width="1.600" stroke-dasharray="2.050 1.800" transform="rotate(-12 6 6.500)"/><circle cx="13.900" cy="2.800" r="1.500" stroke-width="1.200"/><circle cx="13.900" cy="2.800" r="2.300" stroke-width=".9" stroke-dasharray="1.200 1.210"/><circle cx="13.900" cy="10.500" r="1.500" stroke-width="1.200"/><circle cx="13.900" cy="10.500" r="2.300" stroke-width=".9" stroke-dasharray="1.200 1.210"/></g></svg></span><span class="lb">Setup</span><svg class="ar" viewBox="0 0 8 8"><path d="M6 1L1.800 4L6 7" fill="none" stroke="currentColor" stroke-width="1.250"/></svg></div>
</div>
<div id="card">
 <div class="h1" style="top:0">Select Criteria</div>
 <div id="btpl" class="btn"><svg viewBox="0 0 14 10"><path d="M2.100 0h11.900v10h-12.600a1.400 1.400 0 0 1 -1.400-1.400v-7.300h2.100z" fill="#fff"/><path d="M2.600 1.500v7.300" stroke="#2196f3" stroke-width=".6"/><rect x="4.300" y="2" width="3.700" height="3.400" fill="#2196f3"/><rect x="5.200" y="2.900" width="1.900" height="1.600" fill="#fff"/><path d="M9.300 2.400h3.300M9.300 4h3.300M9.300 5.600h3.300M4.300 7.400h3.800M9.300 7.400h3.300" stroke="#2196f3" stroke-width=".9"/></svg><span>Certificate Template</span></div>
 <div class="hr" style="top:38px"></div>
 <div class="lab" style="left:10px">Module<em>*</em></div>
 <div class="lab" style="left:466px">Patient Status</div>
 <div class="lab" style="left:922px">Certificate Template<em>*</em></div>
 <div class="sel" style="left:10px"><span style="letter-spacing:-.5px">OPD</span><svg class="sar" viewBox="0 0 12 8"><path d="M1.5 1.5 L6 6 L10.5 1.5" fill="none" stroke="#484848" stroke-width="2"/></svg></div>
 <div class="sel" style="left:466px"><span style="letter-spacing:.27px">Not Discharged</span><svg class="sar" viewBox="0 0 12 8"><path d="M1.5 1.5 L6 6 L10.5 1.5" fill="none" stroke="#484848" stroke-width="2"/></svg></div>
 <div class="sel" style="left:922px"><span style="letter-spacing:.12px">Sample Patient File Cover</span><svg class="sar" viewBox="0 0 12 8"><path d="M1.5 1.5 L6 6 L10.5 1.5" fill="none" stroke="#484848" stroke-width="2"/></svg></div>
 <div id="bsearch" class="btn"><svg viewBox="0 0 13 13"><circle cx="5.400" cy="5.400" r="4.100" fill="none" stroke="#fff" stroke-width="2"/><path d="M8.500 8.500l3.300 3.300" stroke="#fff" stroke-width="2.300" stroke-linecap="round"/></svg><span>Search</span></div>
 <div class="hr" style="top:168px"></div>
 <div class="h1 pl" style="top:169px">Patient List</div>
 <div id="bgen" class="btn"><span>Generate</span></div>
 <div class="hr" style="top:211px"></div>
 <div id="tsearch">Search...</div>
 <div id="plen"><span>100</span><svg class="sar" viewBox="0 0 12 8"><path d="M1.5 1.5 L6 6 L10.5 1.5" fill="none" stroke="#484848" stroke-width="2"/></svg></div>
 <div id="tools"><svg viewBox="0 0 15 14" style="left:6px"><path d="M3.400 .500h5.300v3.200M.500 3.400l2.900-2.900v2.900zM.500 3.400v6h4.200" fill="none" stroke="#333" stroke-width="1" stroke-linejoin="round"/><path d="M8 3.700h6v9.800h-9v-6.800z" fill="#fff" stroke="#333" stroke-width="1" stroke-linejoin="round"/><path d="M7.900 3.800v3h-2.900" fill="none" stroke="#333" stroke-width="1"/></svg><svg viewBox="0 0 12 14" style="left:32px;width:12px"><path d="M.500 .500h7.200l3.800 3.700v9.300h-11z" fill="none" stroke="#333" stroke-width="1" stroke-linejoin="round"/><path d="M7.600 .600v3.700h3.800" fill="none" stroke="#333" stroke-width="1"/><path d="M4 7.300l3.800 4.400M7.800 7.300l-3.800 4.400" stroke="#333" stroke-width="1.500" fill="none"/><path d="M3.200 7.200h2M6.600 7.200h2M3.200 11.800h2M6.600 11.800h2" stroke="#333" stroke-width=".8" fill="none"/></svg><svg viewBox="0 0 12 14" style="left:55px;width:12px"><path d="M.500 .500h7.200l3.800 3.700v9.300h-11z" fill="none" stroke="#333" stroke-width="1" stroke-linejoin="round"/><path d="M7.600 .600v3.700h3.800" fill="none" stroke="#333" stroke-width="1"/><path d="M2.900 5.600h6.300M2.900 8.050h6.300M2.900 10.500h6.300" stroke="#333" stroke-width="1.100" fill="none"/></svg><svg viewBox="0 0 12 14" style="left:78px;width:12px"><path d="M.500 .500h7.200l3.800 3.700v9.300h-11z" fill="none" stroke="#333" stroke-width="1" stroke-linejoin="round"/><path d="M7.600 .600v3.700h3.800" fill="none" stroke="#333" stroke-width="1"/><path d="M5.300 4.300c.3 2.400-.9 5.200-2.900 7M5.300 4.300c.3 2.600 1.900 4.300 4.400 4.400M3.300 9.800c1.700-.9 3.900-1.200 6.300-1" stroke="#333" stroke-width=".8" fill="none"/></svg><svg viewBox="0 0 14 13" style="left:100.700px;top:2.700px"><path d="M3.300 4.500v-3.900h5.600l1.700 1.700v2.200" fill="#fff" stroke="#333" stroke-width="1.100"/><path d="M1.500 4.300h11a1.300 1.300 0 0 1 1.300 1.300v3.900h-2.300v-1.800h-9v1.800h-2.300v-3.900a1.300 1.300 0 0 1 1.300-1.300z" fill="#333"/><path d="M3.300 8.200h7.300v3.900h-7.300z" fill="#fff" stroke="#333" stroke-width="1.100"/></svg></div>
 <table id="tb"><thead><tr><th class="c0"><span class="cb"></span><span class="hash">#</span></th><th class="c1">OPD/IPD No<svg class="so" viewBox="0 0 9 4.5"><path d="M0 0H9L4.500 4.500Z" fill="currentColor"/></svg></th><th class="c2">Patient Name<svg class="so" viewBox="0 0 9 4.5"><path d="M0 0H9L4.500 4.500Z" fill="currentColor"/></svg></th><th class="c3">Gender<svg class="so" viewBox="0 0 9 4.5"><path d="M0 0H9L4.500 4.500Z" fill="currentColor"/></svg></th><th class="c4">Mobile Number<svg class="so" viewBox="0 0 9 4.5"><path d="M0 0H9L4.500 4.500Z" fill="currentColor"/></svg></th><th class="c5">Discharged</th></tr></thead>
 <tbody>
<tr><td class="c0"><span class="cb"></span></td><td class="c1">CHKID38</td><td class="c2" style="letter-spacing:0.15px">Crish Jordon (25)</td><td class="c3">Male</td><td class="c4">67876887</td><td class="c5">No</td></tr>
<tr><td class="c0"><span class="cb"></span></td><td class="c1">CHKID39</td><td class="c2" style="letter-spacing:0.15px">Crish Jordon (25)</td><td class="c3">Male</td><td class="c4">67876887</td><td class="c5">No</td></tr>
<tr><td class="c0"><span class="cb"></span></td><td class="c1">CHKID37</td><td class="c2" style="letter-spacing:0.23px">William Marsh (23)</td><td class="c3">Male</td><td class="c4">67856767</td><td class="c5">No</td></tr>
<tr><td class="c0"><span class="cb"></span></td><td class="c1">CHKID36</td><td class="c2" style="letter-spacing:0.30px">Marsh Martin (24)</td><td class="c3">Male</td><td class="c4">87976567676</td><td class="c5">No</td></tr>
<tr><td class="c0"><span class="cb"></span></td><td class="c1">CHKID35</td><td class="c2" style="letter-spacing:0.05px">Soumya Rao (14)</td><td class="c3">Female</td><td class="c4">78674565546</td><td class="c5">No</td></tr>
<tr><td class="c0"><span class="cb"></span></td><td class="c1">CHKID34</td><td class="c2" style="letter-spacing:0.14px">Olivier Thomas (1)</td><td class="c3">Male</td><td class="c4">7896541230</td><td class="c5">No</td></tr>
<tr><td class="c0"><span class="cb"></span></td><td class="c1">CHKID33</td><td class="c2" style="letter-spacing:0.23px">William Marsh (23)</td><td class="c3">Male</td><td class="c4">67856767</td><td class="c5">No</td></tr>
<tr><td class="c0"><span class="cb"></span></td><td class="c1">CHKID31</td><td class="c2" style="letter-spacing:0.23px">William Marsh (23)</td><td class="c3">Male</td><td class="c4">67856767</td><td class="c5">No</td></tr>
<tr><td class="c0"><span class="cb"></span></td><td class="c1">CHKID30</td><td class="c2" style="letter-spacing:0.11px">Reshu Jain (19)</td><td class="c3">Female</td><td class="c4">789654130</td><td class="c5">No</td></tr>
<tr><td class="c0"><span class="cb"></span></td><td class="c1">CHKID29</td><td class="c2" style="letter-spacing:0.19px">Umair Jain (22)</td><td class="c3">Male</td><td class="c4">789541230</td><td class="c5">No</td></tr>
<tr><td class="c0"><span class="cb"></span></td><td class="c1">CHKID27</td><td class="c2" style="letter-spacing:0.02px">Aaron (21)</td><td class="c3">Male</td><td class="c4">82937410</td><td class="c5">No</td></tr>
<tr><td class="c0"><span class="cb"></span></td><td class="c1">CHKID26</td><td class="c2" style="letter-spacing:0.24px">Martin Biden (20)</td><td class="c3">Male</td><td class="c4">785675675</td><td class="c5">No</td></tr>
<tr><td class="c0"><span class="cb"></span></td><td class="c1">CHKID25</td><td class="c2" style="letter-spacing:0.11px">Reshu Jain (19)</td><td class="c3">Female</td><td class="c4">789654130</td><td class="c5">No</td></tr>
<tr><td class="c0"><span class="cb"></span></td><td class="c1">CHKID28</td><td class="c2" style="letter-spacing:0.11px">Reshu Jain (19)</td><td class="c3">Female</td><td class="c4">789654130</td><td class="c5">No</td></tr>
<tr><td class="c0"><span class="cb"></span></td><td class="c1">CHKID24</td><td class="c2" style="letter-spacing:0.17px">Maria Fernandis (4)</td><td class="c3">Female</td><td class="c4">544454587</td><td class="c5">No</td></tr>
<tr><td class="c0"><span class="cb"></span></td><td class="c1">CHKID23</td><td class="c2" style="letter-spacing:0.28px">Mukul singh (16)</td><td class="c3">Male</td><td class="c4">65745656</td><td class="c5">No</td></tr>
<tr><td class="c0"><span class="cb"></span></td><td class="c1">CHKID22</td><td class="c2" style="letter-spacing:0.04px">Kevline (18)</td><td class="c3">Female</td><td class="c4">8527419630</td><td class="c5">No</td></tr>
<tr><td class="c0"><span class="cb"></span></td><td class="c1">CHKID18</td><td class="c2" style="letter-spacing:0.25px">John Marshall (2)</td><td class="c3">Male</td><td class="c4">9856475632</td><td class="c5">No</td></tr>
<tr><td class="c0"><span class="cb"></span></td><td class="c1">CHKID17</td><td class="c2" style="letter-spacing:0.14px">Olivier Thomas (1)</td><td class="c3">Male</td><td class="c4">7896541230</td><td class="c5">No</td></tr>
<tr><td class="c0"><span class="cb"></span></td><td class="c1">CHKID16</td><td class="c2" style="letter-spacing:0.08px">James Dev (3)</td><td class="c3">Male</td><td class="c4">9874563251</td><td class="c5">No</td></tr>
<tr><td class="c0"><span class="cb"></span></td><td class="c1">CHKID12</td><td class="c2" style="letter-spacing:0.14px">Olivier Thomas (1)</td><td class="c3">Male</td><td class="c4">7896541230</td><td class="c5">No</td></tr>
<tr><td class="c0"><span class="cb"></span></td><td class="c1">CHKID10</td><td class="c2" style="letter-spacing:0.20px">Ania Jobs (13)</td><td class="c3">Female</td><td class="c4">876645456</td><td class="c5">No</td></tr>
<tr><td class="c0"><span class="cb"></span></td><td class="c1">CHKID32</td><td class="c2" style="letter-spacing:0.20px">Ania Jobs (13)</td><td class="c3">Female</td><td class="c4">876645456</td><td class="c5">No</td></tr>
<tr><td class="c0"><span class="cb"></span></td><td class="c1">CHKID7</td><td class="c2" style="letter-spacing:0.25px">Smith Marsh (10)</td><td class="c3">Male</td><td class="c4">898753445</td><td class="c5">No</td></tr>
<tr><td class="c0"><span class="cb"></span></td><td class="c1">CHKID6</td><td class="c2" style="letter-spacing:0.25px">Smith Marsh (10)</td><td class="c3">Male</td><td class="c4">898753445</td><td class="c5">No</td></tr>
<tr><td class="c0"><span class="cb"></span></td><td class="c1">CHKID5</td><td class="c2" style="letter-spacing:0.17px">Aditya Namdeo (5)</td><td class="c3">Male</td><td class="c4">67456546</td><td class="c5">No</td></tr>
<tr><td class="c0"><span class="cb"></span></td><td class="c1">CHKID2</td><td class="c2" style="letter-spacing:0.17px">Maria Fernandis (4)</td><td class="c3">Female</td><td class="c4">544454587</td><td class="c5">No</td></tr>
<tr><td class="c0"><span class="cb"></span></td><td class="c1">CHKID1</td><td class="c2" style="letter-spacing:0.30px">John Smith (6)</td><td class="c3">Male</td><td class="c4">3698521470</td><td class="c5">No</td></tr>
 </tbody></table>
 <div id="rec">Records: 1 to 28 of 28</div>
 <div id="pag"><svg viewBox="0 0 6 8"><path d="M4.5 1 L1.5 4 L4.5 7" fill="none" stroke="#777" stroke-width="1"/></svg><span>1</span><svg viewBox="0 0 6 8"><path d="M1.5 1 L4.5 4 L1.5 7" fill="none" stroke="#777" stroke-width="1"/></svg></div>
</div>
<div id="foot">&copy; 2021 Smart Hospital &amp; Research Center</div>
</body></html>
